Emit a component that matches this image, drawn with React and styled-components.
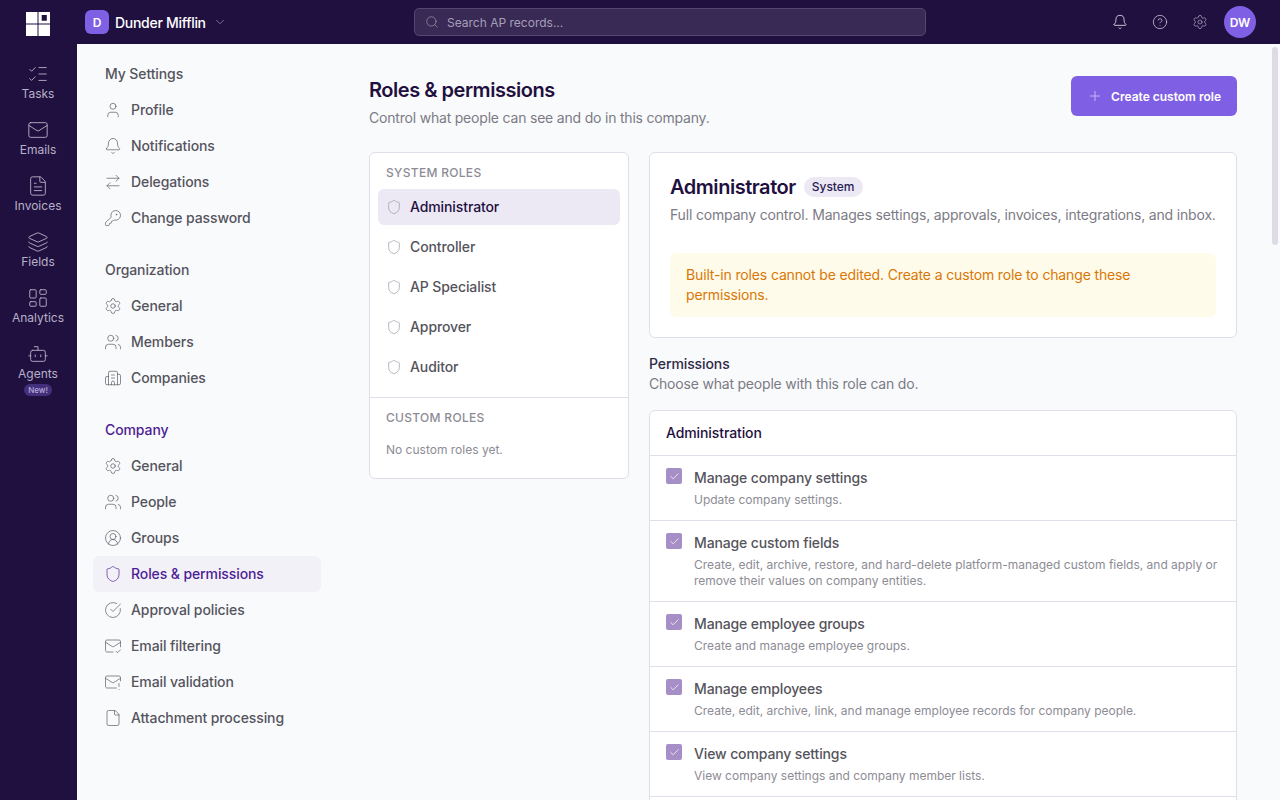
import React from "react";
import styled, { createGlobalStyle } from "styled-components";
import {
  ArrowRightLeft,
  Bell,
  Bot,
  Building2,
  Check,
  ChevronDown,
  CircleCheckBig,
  CircleHelp,
  CircleUserRound,
  File,
  FileText,
  KeyRound,
  Layers,
  LayoutDashboard,
  ListChecks,
  Mail,
  MailCheck,
  MailWarning,
  Plus,
  Search,
  Settings,
  Shield,
  User,
  Users,
} from "lucide-react";

const railItems = [
  ["Tasks", ListChecks],
  ["Emails", Mail],
  ["Invoices", FileText],
  ["Fields", Layers],
  ["Analytics", LayoutDashboard],
  ["Agents", Bot],
];

const navGroups = [
  {
    title: "My Settings",
    items: [
      ["Profile", User],
      ["Notifications", Bell],
      ["Delegations", ArrowRightLeft],
      ["Change password", KeyRound],
    ],
  },
  {
    title: "Organization",
    items: [
      ["General", Settings],
      ["Members", Users],
      ["Companies", Building2],
    ],
  },
  {
    title: "Company",
    current: true,
    items: [
      ["General", Settings],
      ["People", Users],
      ["Groups", CircleUserRound],
      ["Roles & permissions", Shield, true],
      ["Approval policies", CircleCheckBig],
      ["Email filtering", MailCheck],
      ["Email validation", MailWarning],
      ["Attachment processing", File],
    ],
  },
];

const systemRoles = ["Administrator", "Controller", "AP Specialist", "Approver", "Auditor"];

const permissions = [
  ["Manage company settings", "Update company settings."],
  [
    "Manage custom fields",
    "Create, edit, archive, restore, and hard-delete platform-managed custom fields, and apply or remove their values on company entities.",
  ],
  ["Manage employee groups", "Create and manage employee groups."],
  ["Manage employees", "Create, edit, archive, link, and manage employee records for company people."],
  ["View company settings", "View company settings and company member lists."],
];

const App = () => {
  return (
    <>
      <GlobalStyle />
      <Shell>
        <Rail>
          <Logo>
            <svg width="24" height="24" viewBox="0 0 24 24">
              <rect x="0" y="0" width="11.5" height="11.5" fill="#fff" />
              <path d="M12.500 0H24V11.500H12.500ZM15.700 3V8.700H20.800V3Z" fill="#fff" fillRule="evenodd" />
              <rect x="0" y="12.500" width="11.500" height="11.500" fill="#fff" />
              <rect x="12.500" y="12.500" width="11.500" height="11.500" fill="#fff" />
            </svg>
          </Logo>
          {railItems.map(([label, Icon]) => (
            <RailItem key={label}>
              <Icon size={22} strokeWidth={1} />
              <span>{label}</span>
              {label === "Agents" && <NewBadge>New!</NewBadge>}
            </RailItem>
          ))}
        </Rail>
        <Body>
          <TopBar>
            <CompanySwitch>
              <CompanyMark>D</CompanyMark>
              <CompanyName>Dunder Mifflin</CompanyName>
              <ChevronDown size={14} strokeWidth={1} color="#b9b2c8" />
            </CompanySwitch>
            <SearchBox>
              <Search size={14} strokeWidth={1.1} color="#a79fba" />
              <span>Search AP records...</span>
            </SearchBox>
            <TopActions>
              <Bell size={16} strokeWidth={1.2} color="#efedf3" />
              <CircleHelp size={16} strokeWidth={1.1} color="#d6d2de" />
              <Settings size={16} strokeWidth={1} color="#b9b2c8" />
              <Avatar>DW</Avatar>
            </TopActions>
          </TopBar>
          <Content>
            <SideNav>
              {navGroups.map((group) => (
                <NavGroup key={group.title}>
                  <NavTitle $current={group.current}>{group.title}</NavTitle>
                  {group.items.map(([label, Icon, active]) => (
                    <NavItem key={label} $active={active}>
                      <Icon size={18} strokeWidth={0.9} />
                      <span>{label}</span>
                    </NavItem>
                  ))}
                </NavGroup>
              ))}
            </SideNav>
            <Main>
              <PageHeader>
                <div>
                  <PageTitle>Roles &amp; permissions</PageTitle>
                  <PageSub>Control what people can see and do in this company.</PageSub>
                </div>
                <CreateButton>
                  <Plus size={16} strokeWidth={1.2} color="#d5caf7" />
                  Create custom role
                </CreateButton>
              </PageHeader>
              <Columns>
                <RolesCard>
                  <RolesSection>
                    <RolesLabel>SYSTEM ROLES</RolesLabel>
                    {systemRoles.map((role, i) => (
                      <RoleItem key={role} $selected={i === 0}>
                        <Shield size={16} strokeWidth={0.9} color="#8d8a96" />
                        <span>{role}</span>
                      </RoleItem>
                    ))}
                  </RolesSection>
                  <CustomRoles>
                    <RolesLabel>CUSTOM ROLES</RolesLabel>
                    <EmptyText>No custom roles yet.</EmptyText>
                  </CustomRoles>
                </RolesCard>
                <Detail>
                  <SummaryCard>
                    <RoleHeading>
                      <RoleName>Administrator</RoleName>
                      <SystemBadge>System</SystemBadge>
                    </RoleHeading>
                    <RoleDescription>
                      Full company control. Manages settings, approvals, invoices, integrations, and inbox.
                    </RoleDescription>
                    <Notice>Built-in roles cannot be edited. Create a custom role to change these permissions.</Notice>
                  </SummaryCard>
                  <PermHeading>Permissions</PermHeading>
                  <PermSub>Choose what people with this role can do.</PermSub>
                  <PermCard>
                    <PermCardTitle>Administration</PermCardTitle>
                    {permissions.map(([name, text]) => (
                      <PermRow key={name}>
                        <CheckBox>
                          <Check size={11} strokeWidth={1.6} color="#fff" />
                        </CheckBox>
                        <div>
                          <PermName>{name}</PermName>
                          <PermText>{text}</PermText>
                        </div>
                      </PermRow>
                    ))}
                  </PermCard>
                </Detail>
              </Columns>
            </Main>
            <ScrollThumb />
          </Content>
        </Body>
      </Shell>
    </>
  );
};

export default App;

const GlobalStyle = createGlobalStyle`
  * {
    box-sizing: border-box;
  }

  html, body {
    margin: 0;
    height: 100%;
    overflow: hidden;
    font-family: Inter, "Liberation Sans", sans-serif;
  }
`;

const Shell = styled.div`
  display: flex;
  width: 1280px;
  height: 800px;
  overflow: hidden;
  background-color: #1f1040;
`;

const Rail = styled.nav`
  display: flex;
  flex-direction: column;
  align-items: center;
  flex: 0 0 77px;
  padding: 12px 1px 0 0;
`;

const Logo = styled.div`
  display: flex;
  height: 24px;
  margin-bottom: 16px;
`;

const RailItem = styled.div`
  display: flex;
  flex-direction: column;
  align-items: center;
  flex: 0 0 56px;
  padding-top: 11px;
  color: #b7b0c6;
  font-size: 12px;
  line-height: 16px;

  svg {
    flex-shrink: 0;
    margin-bottom: 1px;
  }
`;

const NewBadge = styled.span`
  margin-top: 2px;
  padding: 0 4px;
  border-radius: 6px;
  background-color: #43307c;
  color: #b7aadb;
  font-size: 8px;
  font-weight: 500;
  line-height: 12px;
`;

const Body = styled.div`
  display: flex;
  flex-direction: column;
  flex: 1;
  min-width: 0;
`;

const TopBar = styled.header`
  position: relative;
  display: flex;
  align-items: center;
  justify-content: space-between;
  flex: 0 0 44px;
  padding: 0 24px 0 8px;
`;

const CompanySwitch = styled.div`
  display: flex;
  align-items: center;
  gap: 6px;
`;

const CompanyMark = styled.div`
  display: flex;
  align-items: center;
  justify-content: center;
  width: 24px;
  height: 24px;
  border-radius: 6px;
  background-color: #7f5fe3;
  color: #fff;
  font-size: 12px;
  font-weight: 600;
`;

const CompanyName = styled.div`
  margin-right: 1px;
  color: #fff;
  font-size: 14px;
  font-weight: 500;
  letter-spacing: -0.29px;
`;

const SearchBox = styled.div`
  position: absolute;
  left: 337px;
  top: 8px;
  display: flex;
  align-items: center;
  gap: 8px;
  width: 512px;
  height: 28px;
  padding-left: 10px;
  border: 1px solid #544672;
  border-radius: 5px;
  background-color: #382a54;
  color: #a79fba;
  font-size: 12px;
`;

const TopActions = styled.div`
  display: flex;
  align-items: center;
  gap: 24px;

  svg:nth-child(3) {
    margin-right: -8px;
  }
`;

const Avatar = styled.div`
  display: flex;
  align-items: center;
  justify-content: center;
  width: 32px;
  height: 32px;
  border-radius: 50%;
  background-color: #7f5fe3;
  color: #fff;
  font-size: 12px;
  font-weight: 600;
`;

const Content = styled.div`
  position: relative;
  display: flex;
  flex: 1;
  min-height: 0;
  overflow: hidden;
  background-color: #f9fafc;
`;

const SideNav = styled.aside`
  flex: 0 0 260px;
  padding: 12px 16px 0;
`;

const NavGroup = styled.div`
  margin-bottom: 16px;
`;

const NavTitle = styled.div`
  display: flex;
  align-items: center;
  height: 36px;
  padding: 0 0 2px 12px;
  color: ${({ $current }) => ($current ? "#4c1d95" : "#55545c")};
  font-size: 14px;
  font-weight: 500;
  letter-spacing: -0.1px;
`;

const NavItem = styled.div`
  display: flex;
  align-items: center;
  gap: 9px;
  height: 36px;
  padding-left: 11px;
  border-radius: 6px;
  background-color: ${({ $active }) => ($active ? "#f3f1f8" : "transparent")};
  color: ${({ $active }) => ($active ? "#4c1d95" : "#55545c")};
  font-size: 14px;
  font-weight: 500;
  letter-spacing: -0.1px;

  span {
    margin-bottom: 2px;
  }
`;

const Main = styled.main`
  flex: 0 0 868px;
  margin-left: 32px;
  padding-top: 32px;
`;

const PageHeader = styled.div`
  display: flex;
  align-items: flex-start;
  justify-content: space-between;
  margin-bottom: 24px;
`;

const PageTitle = styled.h1`
  margin: 0 0 4px;
  color: #1f1040;
  font-size: 20px;
  font-weight: 600;
  line-height: 28px;
  letter-spacing: -0.47px;
`;

const PageSub = styled.p`
  margin: 0;
  color: #7c7b85;
  font-size: 14px;
  line-height: 20px;
  letter-spacing: -0.2px;
`;

const CreateButton = styled.button`
  display: flex;
  align-items: center;
  gap: 8px;
  height: 40px;
  padding: 0 16px;
  border: none;
  border-radius: 6px;
  background-color: #7f5fe3;
  color: #fff;
  font-family: inherit;
  font-size: 12px;
  font-weight: 600;
`;

const Columns = styled.div`
  display: flex;
  align-items: flex-start;
  gap: 20px;
`;

const RolesCard = styled.div`
  flex: 0 0 260px;
  border: 1px solid #e0deea;
  border-radius: 6px;
  background-color: #fff;
`;

const RolesSection = styled.div`
  padding: 8px 8px 12px;
`;

const RolesLabel = styled.div`
  padding: 4px 8px 0;
  height: 28px;
  color: #8d8c95;
  font-size: 12px;
  font-weight: 500;
  line-height: 16px;
  letter-spacing: 0.3px;
`;

const RoleItem = styled.div`
  display: flex;
  align-items: center;
  gap: 8px;
  height: 36px;
  margin-bottom: 4px;
  padding-left: 8px;
  border-radius: 6px;
  background-color: ${({ $selected }) => ($selected ? "#ece9f5" : "transparent")};
  color: ${({ $selected }) => ($selected ? "#1f1040" : "#55545c")};
  font-size: 14px;
  font-weight: 500;
  letter-spacing: -0.1px;

  span {
    margin-bottom: 2px;
  }

  &:last-child {
    margin-bottom: 0;
  }
`;

const CustomRoles = styled.div`
  padding: 8px 8px 20px;
  border-top: 1px solid #e0deea;
`;

const EmptyText = styled.div`
  padding: 8px 8px 0;
  color: #8d8c95;
  font-size: 12px;
  line-height: 16px;
`;

const Detail = styled.div`
  flex: 1;
  min-width: 0;
`;

const SummaryCard = styled.section`
  height: 186px;
  padding: 20px;
  margin-bottom: 16px;
  border: 1px solid #e0deea;
  border-radius: 6px;
  background-color: #fff;
`;

const RoleHeading = styled.div`
  display: flex;
  align-items: center;
  gap: 8px;
  margin-bottom: 4px;
`;

const RoleName = styled.h2`
  margin: 0;
  color: #1f1040;
  font-size: 20px;
  font-weight: 600;
  line-height: 28px;
  letter-spacing: -0.46px;
`;

const SystemBadge = styled.span`
  padding: 0 8px;
  border-radius: 10px;
  background-color: #ece9f5;
  color: #2b1b54;
  font-size: 12px;
  font-weight: 500;
  line-height: 20px;
`;

const RoleDescription = styled.p`
  margin: 0 0 28px;
  color: #7c7b85;
  font-size: 14px;
  line-height: 20px;
  letter-spacing: -0.17px;
`;

const Notice = styled.div`
  padding: 12px 16px;
  border-radius: 6px;
  background-color: #fffbeb;
  color: #d97706;
  font-size: 14px;
  line-height: 20px;
  letter-spacing: -0.145px;
`;

const PermHeading = styled.h3`
  margin: 0;
  color: #2f2a45;
  font-size: 14px;
  font-weight: 500;
  line-height: 20px;
  letter-spacing: -0.1px;
`;

const PermSub = styled.p`
  margin: 0 0 16px;
  color: #7c7b85;
  font-size: 14px;
  line-height: 20px;
  letter-spacing: -0.2px;
`;

const PermCard = styled.section`
  min-height: 480px;
  border: 1px solid #e0deea;
  border-radius: 6px;
  background-color: #fff;
`;

const PermCardTitle = styled.div`
  display: flex;
  align-items: center;
  height: 45px;
  padding: 0 0 2px 16px;
  border-bottom: 1px solid #e0deea;
  color: #1f1040;
  font-size: 14px;
  font-weight: 500;
  letter-spacing: -0.1px;
`;

const PermRow = styled.div`
  display: flex;
  gap: 12px;
  padding: 12px 16px;
  border-bottom: 1px solid #e0deea;
`;

const CheckBox = styled.div`
  display: flex;
  align-items: center;
  justify-content: center;
  flex: 0 0 16px;
  height: 16px;
  border-radius: 2px;
  background-color: #a68fc6;
`;

const PermName = styled.div`
  margin-bottom: 4px;
  color: #55545c;
  font-size: 14px;
  font-weight: 500;
  line-height: 20px;
  letter-spacing: -0.13px;
`;

const PermText = styled.div`
  color: #8d8c95;
  font-size: 12px;
  line-height: 16px;
  letter-spacing: -0.01px;
`;

const ScrollThumb = styled.div`
  position: absolute;
  top: 3px;
  right: 2px;
  width: 6px;
  height: 198px;
  border-radius: 3px;
  background-color: #dedbe6;
`;
